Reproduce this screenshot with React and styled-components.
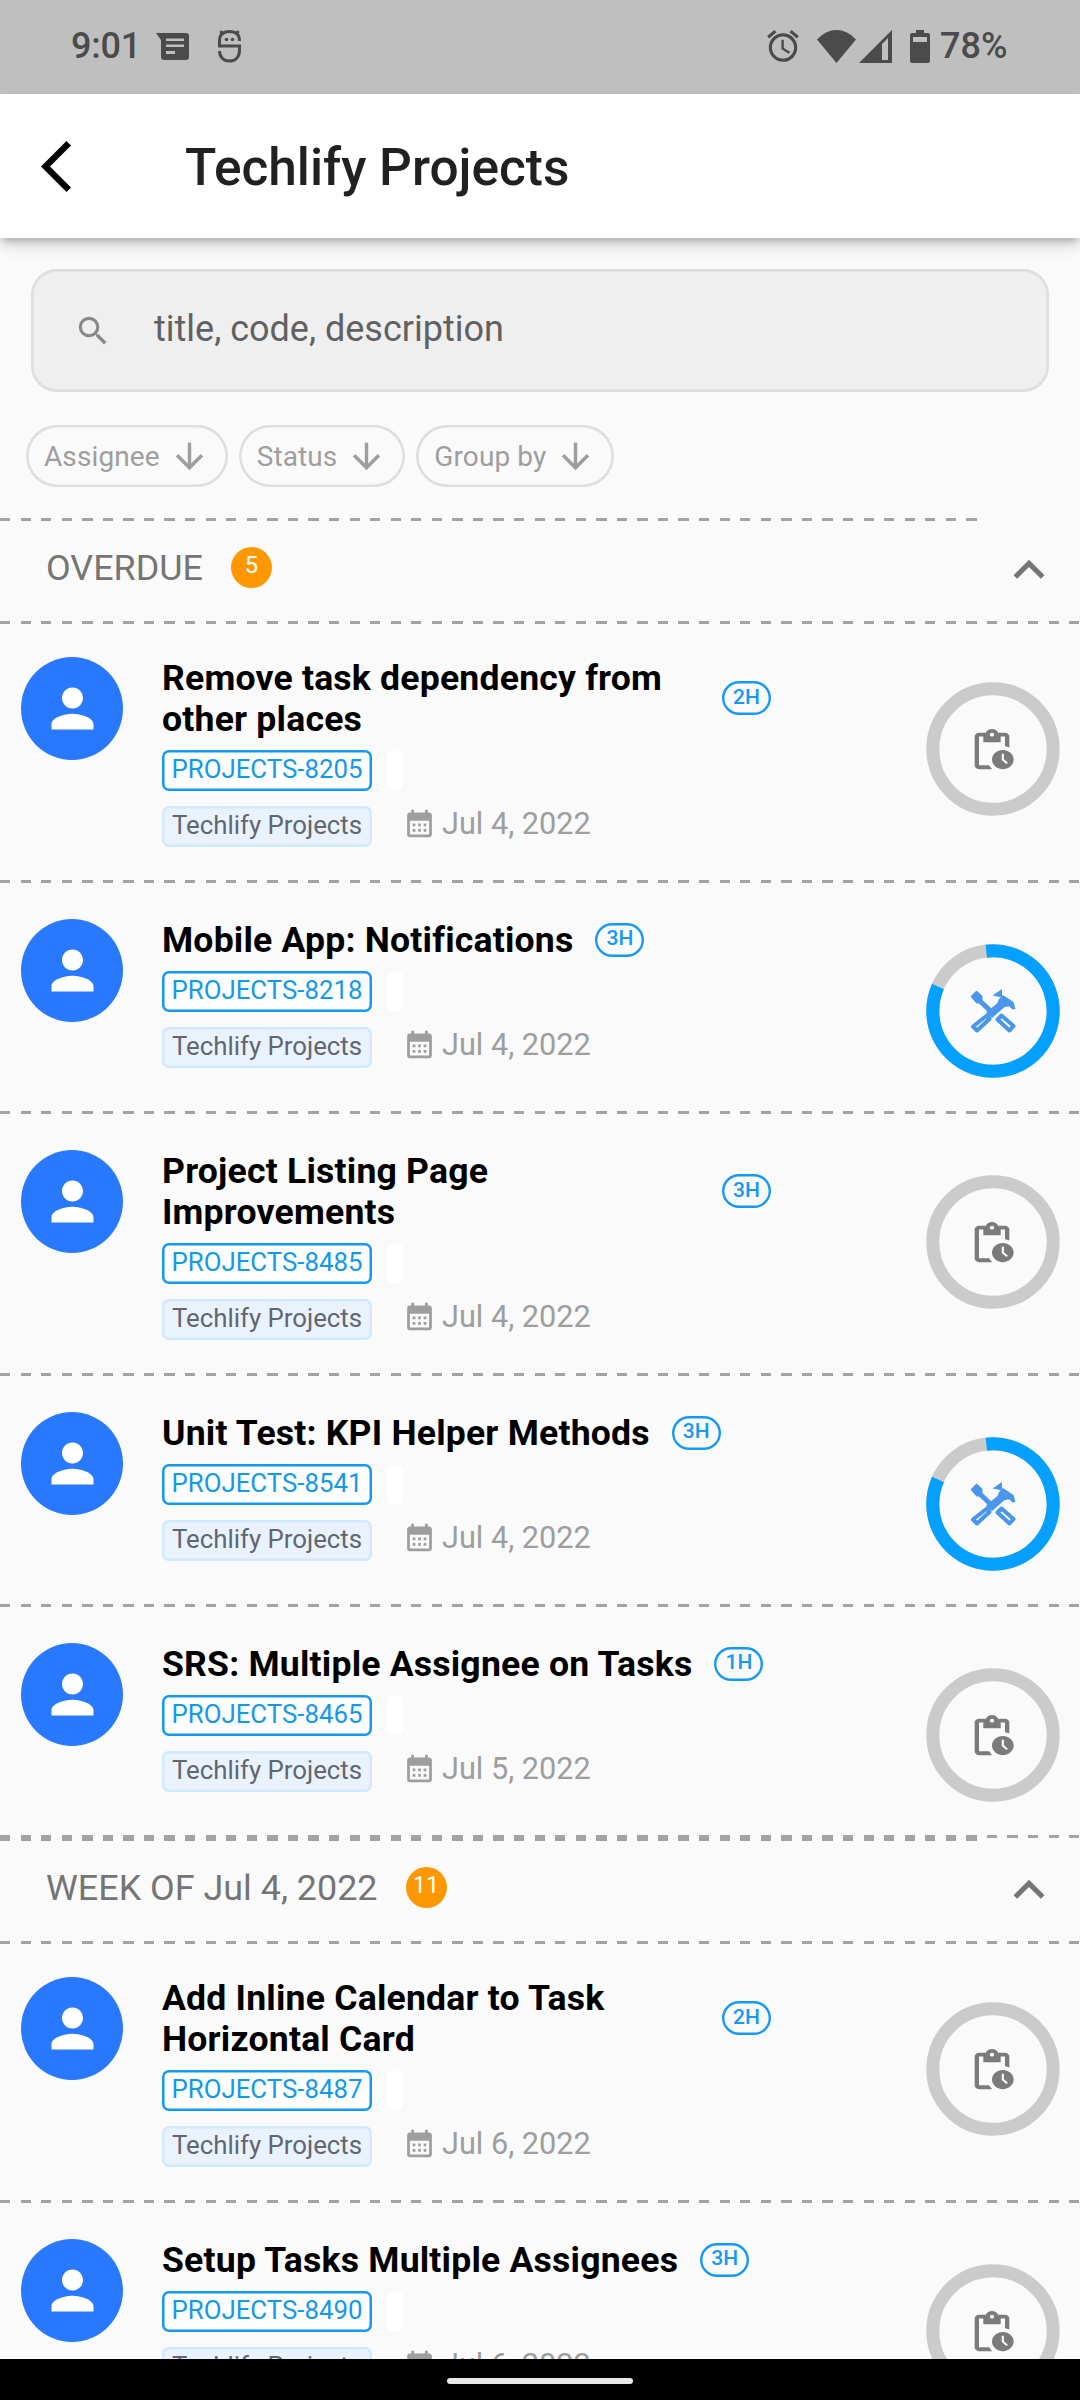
import React from "react";
import styled, { createGlobalStyle } from "styled-components";
import {
  MdPerson,
  MdSearch,
  MdArrowDownward,
  MdExpandLess,
  MdPendingActions,
  MdCalendarMonth,
  MdAlarm,
} from "react-icons/md";

const GlobalStyle = createGlobalStyle`
  * {
    box-sizing: border-box;
  }
  body {
    margin: 0;
    background-color: #fafafa;
    font-family: Roboto, "Liberation Sans", sans-serif;
  }
`;

const Screen = styled.div`
  width: 1080px;
  height: 2400px;
  display: flex;
  flex-direction: column;
  overflow: hidden;
  background-color: #fafafa;
`;

const StatusBar = styled.header`
  flex: none;
  height: 94px;
  padding: 0 68px 2px 71px;
  display: flex;
  align-items: center;
  justify-content: space-between;
  background-color: #bfbfbf;
  color: #4b4b4b;
  svg {
    display: block;
  }
`;

const StatusGroup = styled.div`
  display: flex;
  align-items: center;
`;

const Clock = styled.span`
  width: 85px;
  font-size: 36px;
  font-weight: 500;
  letter-spacing: -0.2px;
`;

const BatteryText = styled.span`
  width: 72px;
  margin-left: 10px;
  font-size: 36px;
  font-weight: 500;
  letter-spacing: 0.1px;
`;

const StatusIcon = styled.svg`
  margin-left: ${(props) => props.$gap || 0}px;
  fill: currentColor;
`;

const AppBar = styled.div`
  flex: none;
  height: 144px;
  padding-left: 41px;
  display: flex;
  align-items: center;
  background-color: #fff;
  box-shadow: 0 5px 7px -2px rgba(0, 0, 0, 0.22), 0 9px 14px rgba(0, 0, 0, 0.12);
  z-index: 1;
`;

const AppTitle = styled.h1`
  margin: 3px 0 0 114px;
  font-size: 51.4px;
  font-weight: 500;
  line-height: 62px;
  color: #212121;
`;

const Content = styled.main`
  flex: 1;
  min-height: 0;
  overflow: hidden;
  display: flex;
  flex-direction: column;
`;

const SearchBox = styled.div`
  flex: none;
  height: 123px;
  margin: 31px 31px 0;
  padding: 0 0 4px 43px;
  display: flex;
  align-items: center;
  border-radius: 26px;
  box-shadow: inset 0 0 0 2.6px #dedede;
  background-color: #efefef;
  color: #888;
`;

const Placeholder = styled.span`
  margin-left: 42px;
  font-size: 36px;
  color: #616161;
`;

const SearchIcon = styled(MdSearch)`
  margin-top: 4px;
`;

const Filters = styled.div`
  flex: none;
  display: flex;
  gap: 11px;
  margin: 33px 0 31px 26px;
`;

const FilterChip = styled.div`
  height: 62px;
  padding: 0 18px;
  display: flex;
  align-items: center;
  gap: 9px;
  border-radius: 31px;
  box-shadow: inset 0 0 0 2.6px #dedede;
  font-size: 28px;
  letter-spacing: 0.1px;
  color: #9e9e9e;
`;

const Dash = styled.div`
  flex: none;
  width: ${(props) => props.$width || "100%"};
  height: 3px;
  background: repeating-linear-gradient(
    90deg,
    #a3a3a3 0 10.28px,
    transparent 10.28px 20.56px
  );
`;

const SectionHeader = styled.div`
  height: 100px;
  padding: 0 20px 6px 46px;
  display: flex;
  align-items: center;
  color: #757575;
  svg {
    margin-top: 4px;
  }
`;

const SectionTitle = styled.h2`
  margin: 0;
  font-size: 35.9px;
  font-weight: 400;
`;

const Count = styled.span`
  width: 41px;
  height: 41px;
  margin: -2px auto 0 28px;
  padding-bottom: 4px;
  display: flex;
  align-items: center;
  justify-content: center;
  border-radius: 50%;
  background-color: #ff9800;
  font-size: 23.6px;
  color: #fff;
`;

const TaskList = styled.div`
  margin-top: -3px;
`;

const Task = styled.article`
  height: ${(props) => (props.$tall ? 262 : 231)}px;
  display: flex;
  flex-direction: column;
`;

const TaskBody = styled.div`
  flex: 1;
  min-height: 0;
  display: flex;
  align-items: flex-start;
  padding: 36px 20px 0 21px;
`;

const Avatar = styled.div`
  flex: none;
  width: 102px;
  height: 103px;
  display: flex;
  align-items: center;
  justify-content: center;
  border-radius: 50%;
  background-color: #2979ff;
  color: #fff;
`;

const TaskInfo = styled.div`
  flex: 1;
  margin-left: 39px;
`;

const TitleRow = styled.div`
  display: flex;
  align-items: center;
`;

const TaskTitle = styled.h3`
  margin: 1px 0 -1px;
  width: ${(props) => (props.$tall ? "538px" : "auto")};
  font-size: 35.6px;
  font-weight: 700;
  line-height: 41px;
  letter-spacing: 0.2px;
  color: #000;
`;

const Hours = styled.span`
  height: 34px;
  min-width: 49px;
  margin-left: 22px;
  padding: 0 8px 3px;
  display: flex;
  align-items: center;
  justify-content: center;
  border-radius: 17px;
  box-shadow: inset 0 0 0 2.4px #1499f5;
  font-size: 21px;
  font-weight: 500;
  color: #1499f5;
`;

const CodeRow = styled.div`
  display: flex;
  align-items: center;
  margin-top: 11px;
`;

const ProjectRow = styled.div`
  display: flex;
  align-items: center;
  margin-top: 15px;
`;

const Tag = styled.span`
  width: 210px;
  height: 41px;
  padding-bottom: 3px;
  display: flex;
  align-items: center;
  justify-content: center;
  border-radius: 7px;
  box-shadow: inset 0 0 0 2.5px ${(props) => (props.$soft ? "#d0eafb" : "#1499ee")};
  background-color: ${(props) => (props.$soft ? "#eaf3fd" : "#fdfdfd")};
  color: ${(props) => (props.$soft ? "#616670" : "#1499e8")};
  font-size: 25.8px;
  white-space: nowrap;
`;

const EmptyTag = styled.span`
  width: 16px;
  height: 39px;
  margin-left: 15px;
  border-radius: 5px;
  background-color: #fff;
`;

const DueDate = styled.div`
  margin: -7px 0 0 31px;
  display: flex;
  align-items: center;
  gap: 6px;
  font-size: 30.7px;
  color: #9e9e9e;
`;

const Ring = styled.div`
  flex: none;
  width: 134px;
  height: 134px;
  margin-top: 25px;
  display: grid;
  place-items: center;
  > svg {
    grid-area: 1 / 1;
  }
`;

const PendingIcon = styled(MdPendingActions)`
  width: 52px;
  height: 46px;
  margin: 1px 3px 0 0;
  color: #7b7b7b;
`;

const NavBar = styled.footer`
  flex: none;
  height: 41px;
  display: flex;
  justify-content: center;
  align-items: center;
  padding-top: 3px;
  background-color: #000;
`;

const NavHandle = styled.div`
  width: 186px;
  height: 6px;
  border-radius: 3px;
  background-color: #e8e8e8;
`;

const sections = [
  {
    title: "OVERDUE",
    count: 5,
    tasks: [
      { title: "Remove task dependency from other places", code: 8205, hours: "2H", date: "Jul 4, 2022", tall: true },
      { title: "Mobile App: Notifications", code: 8218, hours: "3H", date: "Jul 4, 2022", started: true },
      { title: "Project Listing Page Improvements", code: 8485, hours: "3H", date: "Jul 4, 2022", tall: true },
      { title: "Unit Test: KPI Helper Methods", code: 8541, hours: "3H", date: "Jul 4, 2022", started: true },
      { title: "SRS: Multiple Assignee on Tasks", code: 8465, hours: "1H", date: "Jul 5, 2022" },
    ],
  },
  {
    title: "WEEK OF Jul 4, 2022",
    count: 11,
    tasks: [
      { title: "Add Inline Calendar to Task Horizontal Card", code: 8487, hours: "2H", date: "Jul 6, 2022", tall: true },
      { title: "Setup Tasks Multiple Assignees", code: 8490, hours: "3H", date: "Jul 6, 2022" },
    ],
  },
];

const ToolsIcon = () => (
  <svg width="46" height="44" viewBox="0 0 46 44" fill="#4a96ea">
    <path d="M0.5 7.5 6.5 1.5 12.5 7v4l9 8.500-3.500 3.500L9 14.500H6.500z" />
    <path d="M19.500 27 16 23.500 27.500 14l1.500-4 4-4 10.500 7 2 7-3 .5-3-3h-2.500l-3 1-12 10.500z" />
    <path d="M22.500 6.500 32 0v8.500z" />
    <path d="M17 26.500 3 37.500 7 41.500 19.500 30z" fill="none" stroke="#4a96ea" strokeWidth="4" strokeLinejoin="round" />
    <path d="M31.500 26.500 43.500 37 39.500 41.500 27.500 30.500z" fill="none" stroke="#4a96ea" strokeWidth="4" strokeLinejoin="round" />
  </svg>
);

const ProgressRing = ({ started }) => (
  <Ring>
    <svg width="134" height="134" viewBox="-67 -67 134 134" fill="none" strokeWidth="13">
      <circle r="60.2" stroke="#cbcbcb" />
      {started && (
        <path d="M-6.700 -59.800 A60.200 60.200 0 1 1 -55 -24.500" stroke="#03a0ff" />
      )}
    </svg>
    {started ? <ToolsIcon /> : <PendingIcon preserveAspectRatio="none" />}
  </Ring>
);

const TaskCard = ({ task }) => (
  <Task $tall={task.tall}>
    <TaskBody>
      <Avatar>
        <MdPerson size={63} />
      </Avatar>
      <TaskInfo>
        <TitleRow>
          <TaskTitle $tall={task.tall}>{task.title}</TaskTitle>
          <Hours>{task.hours}</Hours>
        </TitleRow>
        <CodeRow>
          <Tag>PROJECTS-{task.code}</Tag>
          <EmptyTag />
        </CodeRow>
        <ProjectRow>
          <Tag $soft>Techlify Projects</Tag>
          <DueDate>
            <MdCalendarMonth size={33} />
            {task.date}
          </DueDate>
        </ProjectRow>
      </TaskInfo>
      <ProgressRing started={task.started} />
    </TaskBody>
    <Dash />
  </Task>
);

const App = () => {
  return (
    <Screen>
      <GlobalStyle />
      <StatusBar>
        <StatusGroup>
          <Clock>9:01</Clock>
          <StatusIcon width="33" height="27" viewBox="0 0 33 27">
            <path
              fillRule="evenodd"
              d="M0 0h30q3 0 3 3v21q0 3-3 3H8q-3 0-3-3V7zM10 5.500v2.500h18V5.500zm0 6v2.500h18v-2.500zm0 6.500v3h9v-3z"
            />
          </StatusIcon>
          <StatusIcon $gap={28} width="25" height="34" viewBox="0 0 25 34">
            <path
              d="M22.500 12C22.500 6 19 2.500 12.500 2.500S2.500 6 2.500 12v5h20v4c0 7-4 11-10 11s-10-4-10-10M3.500 2l2 3M21.500 2l-2 3"
              fill="none"
              stroke="currentColor"
              strokeWidth="3"
            />
            <circle cx="9.500" cy="10.500" r="1.800" />
            <circle cx="15.500" cy="10.500" r="1.800" />
          </StatusIcon>
        </StatusGroup>
        <StatusGroup>
          <MdAlarm size={38} />
          <StatusIcon $gap={15} width="39" height="33" viewBox="0 0 39 33">
            <path d="M0 9.500Q8.500 0 19.500 0T39 9.500L19.500 33z" />
          </StatusIcon>
          <StatusIcon $gap={3} width="33" height="33" viewBox="0 0 33 33">
            <path fillRule="evenodd" d="M33 0v33H0zM23 14v16h6V8z" />
          </StatusIcon>
          <StatusIcon $gap={18} width="20" height="33" viewBox="0 0 20 33">
            <path
              fillRule="evenodd"
              d="M6 0h8v3h4q2 0 2 2v26q0 2-2 2H2q-2 0-2-2V5q0-2 2-2h4zM3 7v5h14V7z"
            />
          </StatusIcon>
          <BatteryText>78%</BatteryText>
        </StatusGroup>
      </StatusBar>
      <AppBar>
        <svg width="30" height="51" viewBox="0 0 30 51">
          <path d="M25.500 0 30 4.500 9 25.500 30 46.500 25.500 51 0 25.500z" />
        </svg>
        <AppTitle>Techlify Projects</AppTitle>
      </AppBar>
      <Content>
        <SearchBox>
          <SearchIcon size={38} />
          <Placeholder>title, code, description</Placeholder>
        </SearchBox>
        <Filters>
          {["Assignee", "Status", "Group by"].map((name) => (
            <FilterChip key={name}>
              {name}
              <MdArrowDownward size={41} />
            </FilterChip>
          ))}
        </Filters>
        {sections.map((section) => (
          <section key={section.title}>
            <Dash $width="977px" />
            <SectionHeader>
              <SectionTitle>{section.title}</SectionTitle>
              <Count>{section.count}</Count>
              <MdExpandLess size={62} />
            </SectionHeader>
            <Dash />
            <TaskList>
              {section.tasks.map((task) => (
                <TaskCard key={task.code} task={task} />
              ))}
            </TaskList>
          </section>
        ))}
      </Content>
      <NavBar>
        <NavHandle />
      </NavBar>
    </Screen>
  );
};

export default App;
